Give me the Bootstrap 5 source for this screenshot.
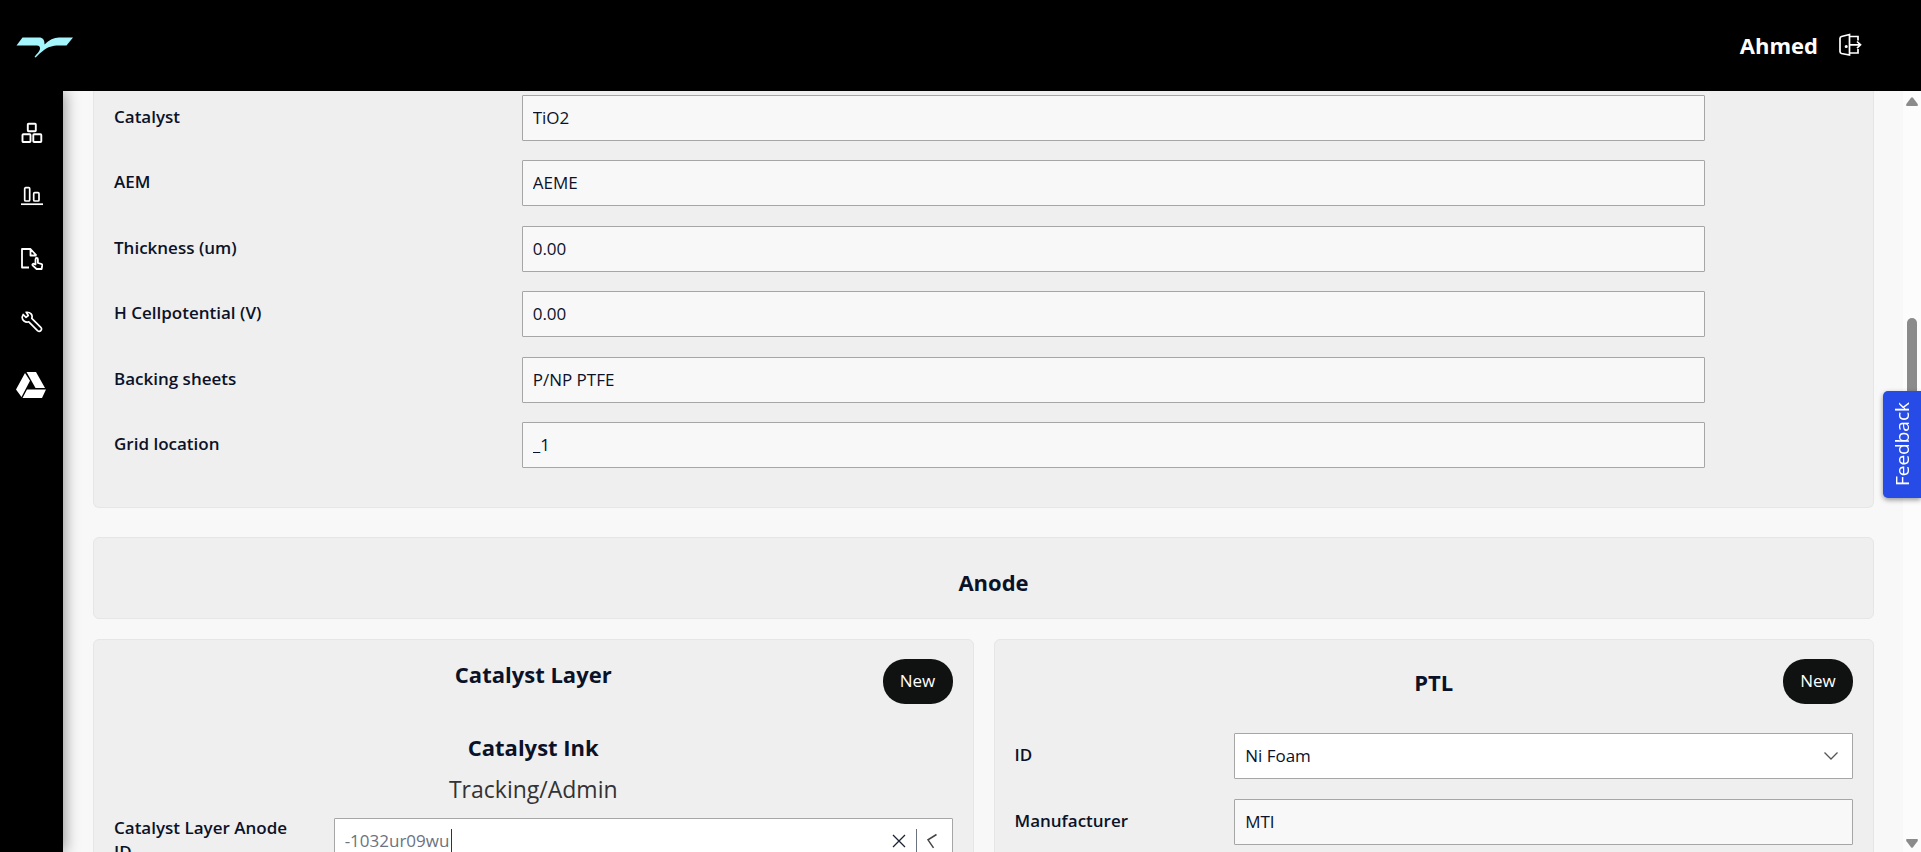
<!DOCTYPE html>
<html lang="en">
<head>
<meta charset="utf-8">
<meta name="viewport" content="width=device-width, initial-scale=1">
<title>Cell build</title>
<link rel="stylesheet" href="https://cdn.jsdelivr.net/npm/bootstrap@5.3.0/dist/css/bootstrap.min.css">
<style>
  body { font-family: "Open Sans", sans-serif; font-size: 17px; line-height: 24px; color: #0b1228; background: #f8f8f8; }
  .topbar { height: 91px; background: #000; padding: 0 59px 2px 16px; }
  .user-name { font-size: 22px; line-height: 30px; font-weight: 700; }
  .side { width: 63px; background: #000; box-shadow: 2px 0 14px rgba(0,0,0,.4); padding: 26px 0 0; gap: 31px; z-index: 1; }
  .side a { height: 32px; }
  .content-area { padding: 0 29px 0 30px; }
  .panel { background: #efefef; border: 1px solid #e6e6e6; border-radius: 6px; padding: 19px 20px 20px; }
  .panel-top { border-top: 0; border-radius: 0 0 6px 6px; padding: 4px 20px 39px; margin-bottom: 29px; }
  .panel-title { min-height: 82px; padding: 0 0 21px 20px; margin-bottom: 20px; }
  .row { --bs-gutter-x: 40px; }
  .pair { --bs-gutter-x: 20px; }
  .field-stack { min-height: 373px; }
  h2, h3 { font-size: 22px; line-height: 30px; font-weight: 700; margin: 0; }
  h4 { font-size: 23px; line-height: 30px; font-weight: 500; margin: 0; color: #333; }
  label { font-weight: 600; padding-bottom: 2px; }
  .form-control, .form-select, .combo { height: 46px; border: 1px solid #a6a6a6; border-radius: 1px; padding: 0 10px 1px; font-size: 17px; line-height: 24px; color: #0b1228; background-color: #f8f8f8; }
  .form-select { background-color: #fff;
    background-image: url("data:image/svg+xml,%3Csvg xmlns='http://www.w3.org/2000/svg' viewBox='0 0 16 10'%3E%3Cpath d='M1.500 1.500 8 8l6.500-6.500' fill='none' stroke='%23555' stroke-width='1.300'/%3E%3C/svg%3E");
    background-size: 16px 10px; background-position: right 13px center; }
  .combo { background: #fff; padding-right: 14px; }
  .combo input { width: 106px; border: 0; padding: 0; outline: 0; color: #6b7280; background: transparent; }
  .combo button { border: 0; background: none; padding: 0; line-height: 0; }
  .caret-bar { width: 1px; height: 23px; background: #333; }
  .combo-rule { width: 1px; height: 24px; background: #6b7280; margin: 0 9px 0 10px; }
  .btn-new { width: 70px; height: 45px; padding: 0 0 2px; border: 0; border-radius: 22px; background: #101211; color: #fff; font-size: 17px; font-weight: 500; }
  .catalyst-head { height: 73px; }
  .ptl-head { height: 74px; }
  .scroll-rail { width: 18px; background: #fcfcfc; padding: 6px 0 4px; }
  .rail-thumb { width: 10px; height: 150px; border-radius: 5px; background: #8b8b8b; margin-top: 212px; }
  .feedback { right: 0; top: 391px; width: 38px; height: 107px; border: 0; border-radius: 5px 0 0 5px; background: #264be6; color: #fff; font-size: 19px; line-height: 26px; font-weight: 500; padding: 0; box-shadow: 0 2px 5px rgba(0,0,0,.4); z-index: 2; }
  .feedback span { writing-mode: vertical-rl; transform: rotate(180deg); }
</style>
</head>
<body class="vh-100 overflow-hidden d-flex flex-column">

<header class="topbar d-flex align-items-center justify-content-between flex-shrink-0 text-white">
  <a href="#" class="pt-1" aria-label="Home">
    <svg width="58" height="22" viewBox="0 0 58 22" class="d-block"><path fill="#a4f5fc" d="M6.500 1.500H23c4 0 5.500 2.500 5.500 6.500v.500C33 4 38 1.500 43 1.500h14L50.500 9.500H43c-7 0-11 1.500-15 4.500-3.500 2.500-6 5-8.500 7.500l-1-.500c3-4 5.500-6 5.500-8.500 0-2-1-3-3-3H.500z"/></svg>
  </a>
  <div class="d-flex align-items-center">
    <span class="user-name me-3">Ahmed</span>
    <a href="#" class="text-white ms-1" aria-label="Log out">
      <svg width="24" height="24" viewBox="0 0 24 24" class="d-block" fill="none" stroke="#fff" stroke-width="1.700"><path d="M11.500 1.500 3.500 3.500Q2 4 2 5.500v13q0 1.500 1.500 2l8 1.500zM12 3.500h8v4M12 20h8v-4M12 11.800h10.500M19 8.500l3.500 3.300-3.500 3.300"/><circle cx="8.200" cy="13.500" r=".7" fill="#fff"/></svg>
    </a>
  </div>
</header>

<div class="d-flex flex-grow-1 overflow-hidden">
  <nav class="side d-flex flex-column align-items-center flex-shrink-0">
    <a href="#" class="d-flex align-items-center" aria-label="Components">
      <svg width="22" height="22" viewBox="0 0 22 22" fill="none" stroke="#fff" stroke-width="1.900"><rect x="6.800" y="1.800" width="8" height="7.500" rx=".8"/><rect x="1.500" y="12.300" width="8" height="7.700" rx=".8"/><rect x="12.300" y="12.300" width="8" height="7.700" rx=".8"/></svg>
    </a>
    <a href="#" class="d-flex align-items-center" aria-label="Charts">
      <svg width="22" height="20" viewBox="0 0 22 20" fill="none" stroke="#fff" stroke-width="1.700"><rect x="3.700" y="1.700" width="5" height="13.300" rx="1"/><rect x="12.700" y="6.700" width="5.300" height="8.300" rx="1"/><path d="M0 18.200h22"/></svg>
    </a>
    <a href="#" class="d-flex align-items-center" aria-label="File selection">
      <svg width="22" height="24" viewBox="0 0 22 24" fill="none" stroke="#fff" stroke-width="1.800" stroke-linejoin="round"><path d="M8 20.500H1V2h8.500l6 6.500M9.500 2v6.500h6"/><path d="M14.500 17.500v-5q0-1.500 1.200-1.500t1.200 1.500V16l3.200.8q1.300.3 1.100 1.700l-.6 3.500h-5l-4-3.700q-.5-.8.300-1.300t1.500.2z"/></svg>
    </a>
    <a href="#" class="d-flex align-items-center" aria-label="Tools">
      <svg width="22" height="22" viewBox="0 0 22 22" fill="none" stroke="#fff" stroke-width="1.700" stroke-linejoin="round"><path d="M2.200 3.500 5 6.300 7.300 4.500 5.200 1.300C9.500.800 12 4 10.800 7.300l9 9q1.500 1.700 0 3.300t-3.300 0L7.800 10.800C4.300 12 .800 9 1.200 6z"/></svg>
    </a>
    <a href="#" class="d-flex align-items-center" aria-label="Drive">
      <svg width="32" height="28" viewBox="0 0 32 28" fill="#fff"><path d="M9 2 14 9.800 5.500 26 0 18.500zM10.500 1h9.500l9 16h-9.500zM11 18.500h19l-4 8.500H6.500z"/></svg>
    </a>
  </nav>

  <main class="content-area flex-grow-1 overflow-hidden">
    <section class="panel panel-top">
      <div class="row">
        <div class="col-11">
          <div class="field-stack d-flex flex-column justify-content-between">
            <div class="row align-items-center">
              <div class="col-3"><label for="catalyst">Catalyst</label></div>
              <div class="col-9"><input class="form-control" id="catalyst" value="TiO2" readonly></div>
            </div>
            <div class="row align-items-center">
              <div class="col-3"><label for="aem">AEM</label></div>
              <div class="col-9"><input class="form-control" id="aem" value="AEME" readonly></div>
            </div>
            <div class="row align-items-center">
              <div class="col-3"><label for="thickness">Thickness (um)</label></div>
              <div class="col-9"><input class="form-control" id="thickness" value="0.00" readonly></div>
            </div>
            <div class="row align-items-center">
              <div class="col-3"><label for="potential">H Cellpotential (V)</label></div>
              <div class="col-9"><input class="form-control" id="potential" value="0.00" readonly></div>
            </div>
            <div class="row align-items-center">
              <div class="col-3"><label for="backing">Backing sheets</label></div>
              <div class="col-9"><input class="form-control" id="backing" value="P/NP PTFE" readonly></div>
            </div>
            <div class="row align-items-center">
              <div class="col-3"><label for="grid">Grid location</label></div>
              <div class="col-9"><input class="form-control" id="grid" value="_1" readonly></div>
            </div>
          </div>
        </div>
      </div>
    </section>

    <section class="panel panel-title d-flex align-items-end justify-content-center">
      <h2>Anode</h2>
    </section>

    <div class="row pair">
      <div class="col-6">
        <section class="panel h-100">
          <div class="catalyst-head position-relative text-center">
            <h3>Catalyst Layer</h3>
            <button type="button" class="btn btn-new position-absolute top-0 end-0">New</button>
          </div>
          <h3 class="text-center pb-2 mb-1">Catalyst Ink</h3>
          <h4 class="text-center pb-2 mb-1">Tracking/Admin</h4>
          <div class="row align-items-center">
            <div class="col-3"><label for="layer-id">Catalyst Layer Anode ID</label></div>
            <div class="col-9">
              <div class="combo d-flex align-items-center">
                <input id="layer-id" value="-1032ur09wu">
                <span class="caret-bar"></span>
                <button type="button" class="ms-auto" aria-label="Clear"><svg width="14" height="14" viewBox="0 0 14 14" fill="none" stroke="#1c2233" stroke-width="1.300"><path d="m1 1 12 12M13 1 1 13"/></svg></button>
                <span class="combo-rule"></span>
                <button type="button" aria-label="Open list"><svg width="12" height="16" viewBox="0 0 12 16" fill="none" stroke="#444" stroke-width="1.500"><path d="M10.500 1.500 2 6.800l5.500 8"/></svg></button>
              </div>
            </div>
          </div>
        </section>
      </div>
      <div class="col-6">
        <section class="panel h-100">
          <div class="ptl-head position-relative text-center pt-2">
            <h3>PTL</h3>
            <button type="button" class="btn btn-new position-absolute top-0 end-0">New</button>
          </div>
          <div class="d-flex flex-column gap-3">
            <div class="row align-items-center pb-1">
              <div class="col-3"><label for="ptl-id">ID</label></div>
              <div class="col-9"><select class="form-select" id="ptl-id"><option>Ni Foam</option></select></div>
            </div>
            <div class="row align-items-center">
              <div class="col-3"><label for="maker">Manufacturer</label></div>
              <div class="col-9"><input class="form-control" id="maker" value="MTI" readonly></div>
            </div>
          </div>
        </section>
      </div>
    </div>
  </main>

  <div class="scroll-rail d-flex flex-column align-items-center flex-shrink-0" aria-hidden="true">
    <svg width="12" height="9" viewBox="0 0 12 9" fill="#8b8b8b"><path d="M5 .700Q6-.300 7 .700l4.500 6Q12.500 9 11 9H1Q-.500 9 .500 6.700z"/></svg>
    <span class="rail-thumb"></span>
    <svg class="mt-auto" width="12" height="9" viewBox="0 0 12 9" fill="#8b8b8b"><path d="M5 8.300Q6 9.300 7 8.300l4.500-6Q12.500 0 11 0H1Q-.500 0 .500 2.300z"/></svg>
  </div>
</div>

<button type="button" class="feedback position-fixed d-flex align-items-center justify-content-center"><span>Feedback</span></button>

<script src="https://cdn.jsdelivr.net/npm/bootstrap@5.3.0/dist/js/bootstrap.bundle.min.js"></script>
</body>
</html>
